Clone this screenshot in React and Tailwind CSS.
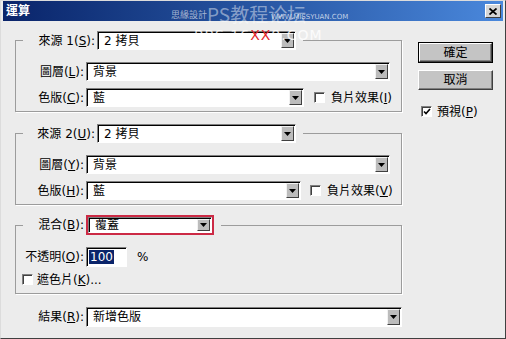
import React from 'react';

const Arrow = () => (
  <span className="flex h-full w-[13px] shrink-0 items-center justify-center border border-t-[#f2f2f2] border-l-[#f2f2f2] border-r-[#404040] border-b-[#404040] bg-[#bcbcbc]">
    <svg width="7" height="4" viewBox="0 0 7 4">
      <path d="M0 0h7L3.5 4z" fill="#000" />
    </svg>
  </span>
);

const Select = ({ className, value }) => (
  <div className={`flex border border-t-[#808080] border-l-[#808080] border-r-white border-b-white bg-white p-[1px] shadow-[inset_1px_1px_0_#000] ${className}`}>
    <span className="flex flex-1 items-center whitespace-nowrap pl-[5px] leading-none">{value}</span>
    <Arrow />
  </div>
);

const Check = ({ checked }) => (
  <span className="flex h-[11px] w-[11px] shrink-0 items-center justify-center border border-t-[#808080] border-l-[#808080] border-r-white border-b-white bg-white shadow-[inset_1px_1px_0_#404040]">
    {checked && (
      <svg width="8" height="7" viewBox="0 0 8 7">
        <path d="M1 3.5l2 2L7 1" stroke="#000" strokeWidth="1.6" fill="none" />
      </svg>
    )}
  </span>
);

const Group = ({ legend, children, className }) => (
  <fieldset className={`w-[387px] border border-[#9c9c9c] shadow-[1px_1px_0_#fff] ${className}`}>
    <legend className="ml-[7px] pr-[7px]">{legend}</legend>
    {children}
  </fieldset>
);

const SourceGroup = ({ n, key1, key2, key3, key4, boxW, checkGap, className }) => (
  <Group
    className={className}
    legend={
      <div className="flex h-[19px] items-center">
        <span className="mr-[2px] w-[72px] text-right">
          來源 {n}(<span className="underline">{key1}</span>):
        </span>
        <Select className="h-[19px] w-[199px]" value="2 拷貝" />
      </div>
    }
  >
    <div className="mt-[12px] flex h-[19px] items-center">
      <span className="mr-[2px] w-[68px] text-right">
        圖層(<span className="underline">{key2}</span>):
      </span>
      <Select className="h-[19px] w-[304px]" value="背景" />
    </div>
    <div className="mt-[7px] mb-[4px] flex h-[19px] items-center">
      <span className="mr-[2px] w-[68px] text-right">
        色版(<span className="underline">{key3}</span>):
      </span>
      <Select className={`h-[19px] ${boxW}`} value="藍" />
      <span className={`flex items-center ${checkGap}`}>
        <Check />
        <span className="ml-[6px]">
          負片效果(<span className="underline">{key4}</span>)
        </span>
      </span>
    </div>
  </Group>
);

export default function App() {
  return (
    <div className="relative flex h-[339px] w-[506px] flex-col overflow-hidden border border-t-[#dcdcdc] border-l-[#dcdcdc] border-r-[#404040] border-b-[#404040] bg-[#ececec] px-[2px] pb-[2px] text-[12px] text-black font-[family-name:'DejaVu_Sans','Noto_Sans_CJK_TC',sans-serif]">
      {/* title bar */}
      <div className="flex h-[20px] shrink-0 items-center justify-between bg-linear-to-r from-[#0a246a] to-[#4a88dc] pl-[3px] pr-[2px]">
        <span className="font-bold text-white">運算</span>
        <span className="flex h-[14px] w-[16px] items-center justify-center border border-t-white border-l-white border-r-[#404040] border-b-[#404040] bg-[#d6d6d6]">
          <svg width="8" height="7" viewBox="0 0 8 7">
            <path d="M0.5 0.5l7 6M7.5 0.5l-7 6" stroke="#000" strokeWidth="1.7" />
          </svg>
        </span>
      </div>

      {/* body */}
      <div className="flex flex-1 pl-[12px] pt-[10px]">
        <div className="flex w-[387px] flex-col">
          <SourceGroup n="1" key1="S" key2="L" key3="C" key4="I" boxW="w-[218px]" checkGap="ml-[10px]" />
          <SourceGroup n="2" key1="U" key2="Y" key3="H" key4="V" boxW="w-[215px]" checkGap="ml-[9px]" className="mt-[12px]" />

          <Group
            className="mt-[10px]"
            legend={
              <div className="flex h-[20px] items-center">
                <span className="mr-[2px] w-[61px] text-right">
                  混合(<span className="underline">B</span>):
                </span>
                <div className="h-[20px] w-[128px] border-2 border-[#cc2a45]">
                  <Select className="h-full w-full" value="覆蓋" />
                </div>
              </div>
            }
          >
            <div className="mt-[12px] flex h-[20px] items-center">
              <span className="mr-[2px] w-[68px] text-right">
                不透明(<span className="underline">O</span>):
              </span>
              <div className="flex h-[20px] w-[41px] items-center border border-t-[#808080] border-l-[#808080] border-r-white border-b-white bg-white pl-[2px] shadow-[inset_1px_1px_0_#000]">
                <span className="bg-[#0a246a] px-[1px] leading-[14px] text-white">100</span>
              </div>
              <span className="ml-[10px]">%</span>
            </div>
            <div className="mt-[5px] mb-[6px] flex h-[15px] items-center pl-[6px]">
              <Check />
              <span className="ml-[4px]">
                遮色片(<span className="underline">K</span>)...
              </span>
            </div>
          </Group>

          <div className="mt-[13px] flex h-[20px] items-center">
            <span className="mr-[2px] w-[69px] text-right">
              結果(<span className="underline">R</span>):
            </span>
            <Select className="h-[20px] w-[316px]" value="新增色版" />
          </div>
        </div>

        {/* buttons */}
        <div className="ml-[16px] flex w-[75px] flex-col pt-[11px]">
          <div className="h-[21px] border border-black">
            <div className="flex h-full items-center justify-center border border-t-white border-l-white border-r-[#404040] border-b-[#404040] bg-[#c4c4c4] shadow-[inset_-1px_-1px_0_#808080]">
              確定
            </div>
          </div>
          <div className="mt-[7px] flex h-[20px] items-center justify-center border border-t-white border-l-white border-r-[#404040] border-b-[#404040] bg-[#c4c4c4] shadow-[inset_-1px_-1px_0_#808080]">
            取消
          </div>
          <div className="mt-[14px] flex h-[15px] items-center pl-[3px]">
            <Check checked />
            <span className="ml-[5px]">
              預視(<span className="underline">P</span>)
            </span>
          </div>
        </div>
      </div>

      {/* watermark */}
      <span className="pointer-events-none absolute left-[170px] top-[10px] text-[9px] leading-none text-white/60">思緣設計</span>
      <span className="pointer-events-none absolute left-[206px] top-[3px] text-[19px] leading-none text-white/45 font-[family-name:'Noto_Sans_CJK_SC',sans-serif]">PS教程论坛</span>
      <span className="pointer-events-none absolute left-[270px] top-[13px] text-[7px] leading-none text-white/70">WWW.MISSYUAN.COM</span>
      <span className="pointer-events-none absolute left-[193px] top-[27px] text-[14px] leading-none tracking-[1px] text-white/80">
        BBS.16<span className="text-[#e3262b]">XX</span>8.COM
      </span>
    </div>
  );
}
